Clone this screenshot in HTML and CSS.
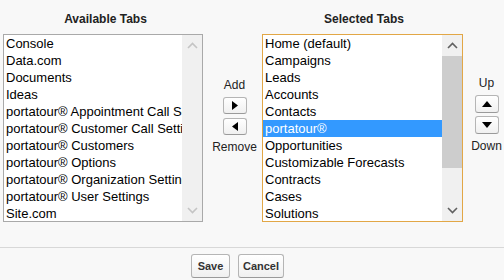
FILE: index.html
```html
<!DOCTYPE html>
<html lang="en">
<head>
  <meta charset="UTF-8">
  <title>Tab Settings</title>
  <link rel="stylesheet" href="styles.css">
</head>
<body>

<div class="picklist">

  <div class="pick-col left">
    <div class="pick-title">Available Tabs</div>
    <div class="listbox">
      <ul class="options">
        <li>Console</li>
        <li>Data.com</li>
        <li>Documents</li>
        <li>Ideas</li>
        <li>portatour® Appointment Call Settings</li>
        <li>portatour® Customer Call Settings</li>
        <li>portatour® Customers</li>
        <li>portatour® Options</li>
        <li>portatour® Organization Settings</li>
        <li>portatour® User Settings</li>
        <li>Site.com</li>
      </ul>
      <div class="scrollbar disabled">
        <span class="arrow"><svg width="11" height="7" viewBox="0 0 11 7"><path d="M1 6 L5.5 1.5 L10 6" fill="none" stroke="currentColor" stroke-width="1.6"/></svg></span>
        <span class="track"></span>
        <span class="arrow"><svg width="11" height="7" viewBox="0 0 11 7"><path d="M1 1 L5.5 5.5 L10 1" fill="none" stroke="currentColor" stroke-width="1.6"/></svg></span>
      </div>
    </div>
  </div>

  <div class="move-col">
    <div class="move-label">Add</div>
    <button class="arrow-btn add"><svg width="6" height="9" viewBox="0 0 6 9"><path d="M0 0 L6 4.5 L0 9 Z"/></svg></button>
    <button class="arrow-btn"><svg width="6" height="9" viewBox="0 0 6 9"><path d="M6 0 L0 4.5 L6 9 Z"/></svg></button>
    <div class="move-label under">Remove</div>
  </div>

  <div class="pick-col right">
    <div class="pick-title">Selected Tabs</div>
    <div class="listbox focused">
      <ul class="options">
        <li>Home (default)</li>
        <li>Campaigns</li>
        <li>Leads</li>
        <li>Accounts</li>
        <li>Contacts</li>
        <li class="selected">portatour®</li>
        <li>Opportunities</li>
        <li>Customizable Forecasts</li>
        <li>Contracts</li>
        <li>Cases</li>
        <li>Solutions</li>
      </ul>
      <div class="scrollbar">
        <span class="arrow"><svg width="11" height="7" viewBox="0 0 11 7"><path d="M1 6 L5.5 1.5 L10 6" fill="none" stroke="currentColor" stroke-width="1.6"/></svg></span>
        <span class="track"><span class="thumb"></span></span>
        <span class="arrow"><svg width="11" height="7" viewBox="0 0 11 7"><path d="M1 1 L5.5 5.5 L10 1" fill="none" stroke="currentColor" stroke-width="1.6"/></svg></span>
      </div>
    </div>
  </div>

  <div class="order-col">
    <div class="move-label">Up</div>
    <button class="arrow-btn tall up"><svg width="10" height="6" viewBox="0 0 10 6"><path d="M0 6 L5 0 L10 6 Z"/></svg></button>
    <button class="arrow-btn tall"><svg width="10" height="6" viewBox="0 0 10 6"><path d="M0 0 L5 6 L10 0 Z"/></svg></button>
    <div class="move-label under">Down</div>
  </div>

</div>

<div class="button-bar">
  <button class="btn save">Save</button>
  <button class="btn cancel">Cancel</button>
</div>

</body>
</html>
```

FILE: styles.css
```css
body {
  margin: 0;
  background-color: #f8f8f8;
  font-family: "Liberation Sans", Arial, sans-serif;
  color: #000;
  height: 280px;
  overflow: hidden;
}
.picklist {
  display: flex;
  align-items: flex-start;
  padding-left: 3px;
  height: 247px;
}
.pick-col.left { width: 200px; }
.pick-col.right { width: 201px; }
.pick-title {
  font-size: 12px;
  font-weight: bold;
  color: #222;
  text-align: center;
  line-height: 14px;
  padding: 12px 0 8px;
}
.pick-col.left .pick-title { padding-left: 5px; }
.pick-col.right .pick-title { padding-left: 3px; }
.listbox {
  display: flex;
  height: 186px;
  border: 1px solid #a9a9a9;
  background: #fff;
}
.listbox.focused { border-color: #e2a746; }
.options {
  flex: 1;
  min-width: 0;
  list-style: none;
  margin: 0;
  padding: 0;
  overflow: hidden;
}
.options li {
  height: 17px;
  line-height: 17px;
  font-size: 13px;
  padding-left: 2px;
  white-space: nowrap;
  overflow: hidden;
}
.options li.selected {
  background-color: #3399ff;
  color: #fff;
}
.scrollbar {
  width: 20px;
  display: flex;
  flex-direction: column;
  background: #f0f0f0;
  color: #606060;
}
.scrollbar.disabled { color: #c4c4c4; }
.scrollbar .arrow {
  height: 21px;
  display: flex;
  align-items: center;
  justify-content: center;
}
.scrollbar .track {
  flex: 1;
  display: block;
}
.thumb {
  display: block;
  height: 112px;
  background: #cdcdcd;
}
.move-col {
  width: 59px;
  padding-top: 78px;
  display: flex;
  flex-direction: column;
  align-items: center;
  padding-left: 4px;
  box-sizing: border-box;
}
.order-col {
  flex: 1;
  padding-top: 76px;
  padding-left: 6px;
  display: flex;
  flex-direction: column;
  align-items: center;
}
.move-label {
  font-size: 12px;
  line-height: 14px;
  color: #222;
  margin-bottom: 5px;
}
.move-label.under {
  margin-top: 5px;
  margin-bottom: 0;
}
.arrow-btn {
  width: 24px;
  height: 17px;
  padding: 0;
  margin: 0;
  display: flex;
  align-items: center;
  justify-content: center;
  border: 1px solid #b5b5b5;
  border-bottom-color: #9a9a9a;
  border-radius: 3px;
  background: linear-gradient(#ffffff, #f0f0f0);
  fill: #000;
}
.arrow-btn.add { margin-bottom: 4px; }
.arrow-btn.tall { height: 18px; }
.arrow-btn.up { margin-bottom: 3px; }
.button-bar {
  border-top: 1px solid #d8d8d8;
  display: flex;
  gap: 8px;
  padding: 6px 0 0 191px;
}
.btn {
  height: 24px;
  padding: 0;
  font-family: "Liberation Sans", Arial, sans-serif;
  font-size: 11px;
  font-weight: bold;
  color: #333;
  border: 1px solid #b5b5b5;
  border-bottom-color: #9a9a9a;
  border-radius: 3px;
  background: linear-gradient(#ffffff, #f0f0f0);
}
.btn.save { width: 39px; }
.btn.cancel { width: 46px; }
```
